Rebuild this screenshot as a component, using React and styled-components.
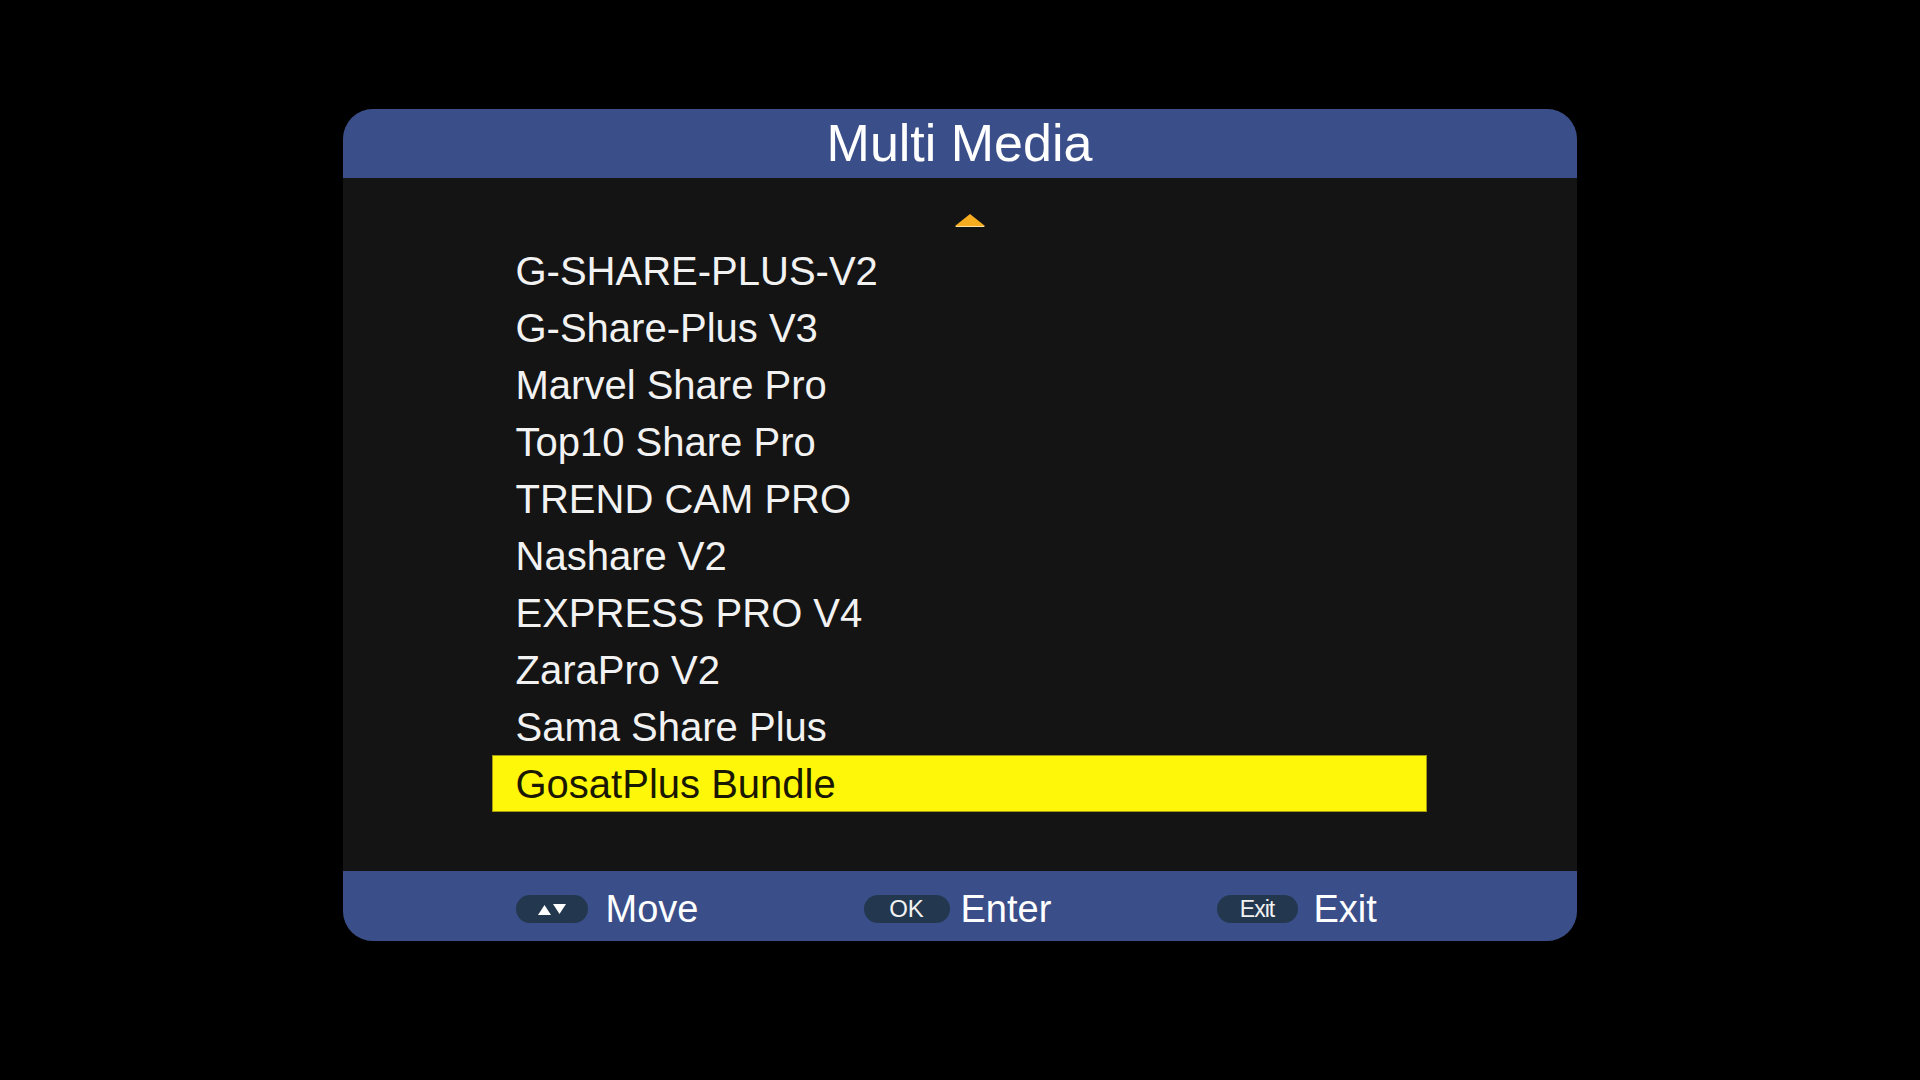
import React from 'react';
import styled, { createGlobalStyle } from 'styled-components';

const GlobalStyle = createGlobalStyle`
  html, body {
    margin: 0;
    padding: 0;
    background: #000;
  }
  body {
    font-family: "Liberation Sans", Arial, sans-serif;
  }
`;

const Screen = styled.div`
  width: 1920px;
  height: 1080px;
  background: #000;
  display: flex;
  justify-content: center;
  align-items: flex-start;
  padding-top: 109px;
  box-sizing: border-box;
`;

const Window = styled.div`
  width: 1234px;
  margin-left: -1px;
  display: flex;
  flex-direction: column;
  border-radius: 30px;
  overflow: hidden;
  background: #141414;
`;

const TitleBar = styled.div`
  height: 69px;
  background: #3a4e89;
  display: flex;
  align-items: center;
  justify-content: center;
  color: #fff;
  font-size: 52px;
  line-height: 1;
  padding-bottom: 2px;
  box-sizing: border-box;
`;

const Body = styled.div`
  height: 693px;
  display: flex;
  flex-direction: column;
  align-items: flex-start;
  padding: 36px 0 0 149px;
  box-sizing: border-box;
`;

const ScrollUp = styled.div`
  width: 0;
  height: 0;
  margin-left: 463px;
  border-left: 15px solid transparent;
  border-right: 15px solid transparent;
  border-bottom: 12px solid #f7ad1f;
  filter: drop-shadow(0 1px 0 #ffe2a0);
`;

const List = styled.ul`
  list-style: none;
  margin: 16px 0 0;
  padding: 0;
  width: 935px;
`;

const Item = styled.li`
  height: 57px;
  display: flex;
  align-items: center;
  padding-left: 24px;
  box-sizing: border-box;
  font-size: 40px;
  line-height: 1;
  color: ${(p) => (p.$active ? '#1a1800' : '#f2f2f2')};
  background: ${(p) => (p.$active ? '#fff70a' : 'transparent')};
  box-shadow: ${(p) => (p.$active ? 'inset 0 0 0 1px #a29a10' : 'none')};
`;

const HelpBar = styled.div`
  height: 70px;
  background: #3a4e89;
  display: flex;
  align-items: center;
  padding: 6px 0 0 173px;
  box-sizing: border-box;
`;

const Hint = styled.div`
  width: ${(p) => p.$width}px;
  display: flex;
  align-items: center;
  gap: ${(p) => p.$gap}px;
  color: #fff;
  font-size: 38px;
  line-height: 1;
`;

const Key = styled.span`
  width: ${(p) => p.$width}px;
  height: 28px;
  border-radius: 14px;
  background: #23384f;
  color: #f2f2f2;
  display: flex;
  align-items: center;
  justify-content: center;
  font-size: ${(p) => p.$size || 24}px;
  letter-spacing: ${(p) => (p.$tight ? '-1px' : '0')};
  flex-shrink: 0;
`;

const items = [
  'G-SHARE-PLUS-V2',
  'G-Share-Plus V3',
  'Marvel Share Pro',
  'Top10 Share Pro',
  'TREND CAM PRO',
  'Nashare V2',
  'EXPRESS PRO V4',
  'ZaraPro V2',
  'Sama Share Plus',
  'GosatPlus Bundle',
];

// up / down pair drawn inside the "Move" key
const ArrowsGlyph = () => (
  <svg width="30" height="13" viewBox="0 0 30 13">
    <polygon points="1,12 7.5,2 14,12" fill="#fff" />
    <polygon points="16,1 29,1 22.5,11" fill="#fff" />
  </svg>
);

export default function App() {
  const selected = items.length - 1;
  return (
    <Screen>
      <GlobalStyle />
      <Window>
        <TitleBar>Multi Media</TitleBar>
        <Body>
          <ScrollUp />
          <List>
            {items.map((name, i) => (
              <Item key={name} $active={i === selected}>
                {name}
              </Item>
            ))}
          </List>
        </Body>
        <HelpBar>
          <Hint $width={348} $gap={18}>
            <Key $width={72}>
              <ArrowsGlyph />
            </Key>
            Move
          </Hint>
          <Hint $width={353} $gap={11}>
            <Key $width={86}>OK</Key>
            Enter
          </Hint>
          <Hint $width={200} $gap={16}>
            <Key $width={81} $size={23} $tight>
              Exit
            </Key>
            Exit
          </Hint>
        </HelpBar>
      </Window>
    </Screen>
  );
}
